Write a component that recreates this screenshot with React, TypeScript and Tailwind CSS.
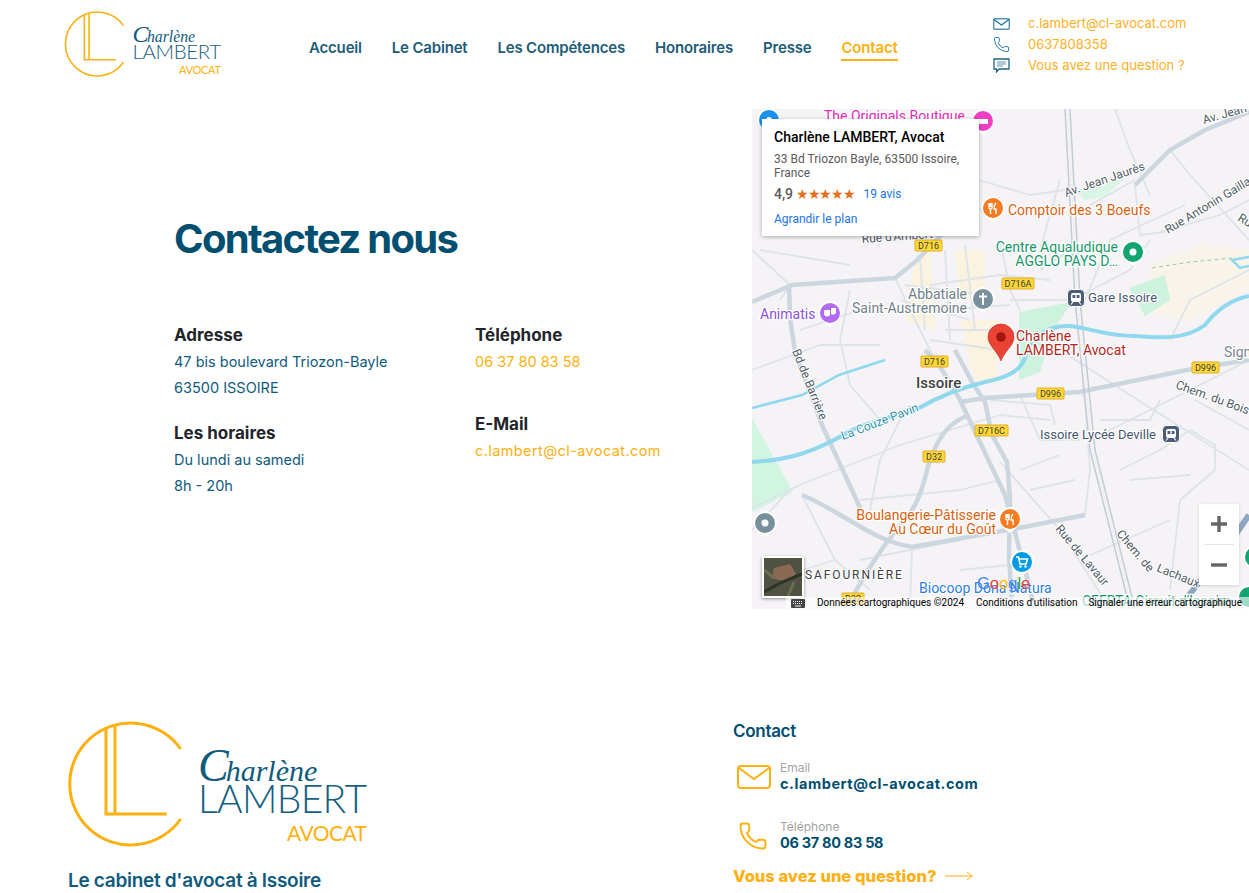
import { Phone } from "lucide-react";

const navItems = ["Accueil", "Le Cabinet", "Les Compétences", "Honoraires", "Presse", "Contact"];

const majorRoads = [
  "M1249 360L1192 369L1079 392L985 398L960 402",
  "M925 350L939 365L959 398L1005 495L1025 570L1035 609",
  "M955 350L972 382L985 402L992 435L1007 462L1010 498L1009 555L1012 609",
  "M852 598C870 565 885 542 905 520C925 495 925 470 932 455C940 435 950 422 969 415",
  "M752 302L792 285L895 278L915 262L932 245L950 225",
  "M802 495C840 510 870 540 912 547L1019 528L1085 515",
  "M789 285L790 318L795 352L822 425L862 512",
  "M1135 185L1170 150L1205 130L1249 112",
];

const minorRoads = [
  "M752 508L802 484L900 445L1000 415",
  "M802 495L835 560L870 590",
  "M752 530L790 490",
  "M1090 440L1170 400L1249 360",
  "M1060 350L1130 395L1249 470",
  "M1085 515L1090 470L1085 400L1082 392",
  "M1120 470L1160 450L1190 430L1215 445L1215 470L1180 500L1170 590",
  "M1000 462L1060 530L1110 609",
  "M1010 300L1072 300L1130 270L1150 240",
  "M1090 205L1135 180",
  "M1160 232L1220 215L1249 200",
  "M1135 185L1140 235L1165 232",
  "M979 180L1030 195L1065 190",
  "M950 225L1000 198",
  "M1115 109L1130 150L1150 195",
  "M1170 150L1190 175L1249 240",
  "M895 278L915 320L935 360",
  "M850 290L840 340L850 385L880 420",
  "M930 285L1000 275L1050 280",
  "M940 310L1010 305",
  "M945 330L1000 330",
  "M860 500L960 490L1000 480",
  "M900 420L880 460L870 510",
  "M1040 270L1070 250",
  "M1085 300L1110 240L1185 205",
  "M1170 340L1190 300L1249 270",
  "M752 250L790 285L780 300",
  "M752 370L820 345L880 345",
  "M1100 420L1150 420L1160 400",
  "M1130 480L1190 475",
  "M1195 400L1249 430",
  "M1090 555L1170 520",
  "M912 547L910 609",
  "M960 570L1010 565",
  "M860 560L960 540",
  "M770 580L835 560",
  "M1020 470L1060 455",
  "M1030 490L1075 480",
  "M1020 395L1040 440L1080 440",
  "M930 340L1000 350",
  "M920 258L925 330",
  "M945 250L950 340",
  "M965 245L975 330",
  "M905 285L985 295",
  "M900 300L970 320",
  "M1000 240L1010 290L1020 310",
  "M990 400L1050 405L1055 425",
  "M1000 415L1050 420",
  "M1060 180L1040 250",
  "M800 330L860 310",
  "M760 250L850 265",
];

const labels = [
  { x: 824, y: 121, text: "The Originals Boutique", color: "#e52bb8" },
  { x: 1008, y: 215, text: "Comptoir des 3 Boeufs", color: "#d9620f" },
  { x: 1118, y: 252, text: "Centre Aqualudique", color: "#16976b", end: true },
  { x: 1118, y: 266, text: "AGGLO PAYS D…", color: "#16976b", end: true },
  { x: 1088, y: 302, text: "Gare Issoire", color: "#47586c", size: 13 },
  { x: 967, y: 299, text: "Abbatiale", color: "#6f7f89", end: true },
  { x: 967, y: 313, text: "Saint-Austremoine", color: "#6f7f89", end: true },
  { x: 760, y: 319, text: "Animatis", color: "#8d4fe0" },
  { x: 1016, y: 341, text: "Charlène", color: "#b3261e" },
  { x: 1016, y: 355, text: "LAMBERT, Avocat", color: "#b3261e" },
  { x: 1224, y: 357, text: "Sign", color: "#7b8791" },
  { x: 916, y: 388, text: "Issoire", color: "#3c4043", weight: 500, size: 15 },
  { x: 1040, y: 439, text: "Issoire Lycée Deville", color: "#47586c", size: 13 },
  { x: 996, y: 520, text: "Boulangerie-Pâtisserie", color: "#d9620f", end: true },
  { x: 996, y: 534, text: "Au Cœur du Goût", color: "#d9620f", end: true },
  { x: 919, y: 593, text: "Biocoop Dôna Natura", color: "#2a7de8" },
  { x: 1082, y: 606, text: "CEFRTA Circuit d'Issoire", color: "#16976b" },
];

const streetLabels = [
  { x: 792, y: 351, angle: 68, text: "Bd de Barrière", color: "#4f5b66" },
  { x: 843, y: 440, angle: -21, text: "La Couze Pavin", color: "#2b93ab" },
  { x: 862, y: 243, angle: -4, text: "Rue d'Ambert", color: "#4f5b66" },
  { x: 1066, y: 197, angle: -19, text: "Av. Jean Jaurès", color: "#4f5b66" },
  { x: 1204, y: 124, angle: -16, text: "Av. Jean", color: "#4f5b66" },
  { x: 1168, y: 234, angle: -31, text: "Rue Antonin Gaillard", color: "#4f5b66" },
  { x: 1237, y: 220, angle: 32, text: "Rue", color: "#4f5b66" },
  { x: 1175, y: 388, angle: 20, text: "Chem. du Bois", color: "#4f5b66" },
  { x: 1055, y: 529, angle: 50, text: "Rue de Lavaur", color: "#4f5b66" },
  { x: 1116, y: 534, angle: 50, text: "Chem. de", color: "#4f5b66" },
  { x: 1156, y: 571, angle: 22, text: "Lachaux", color: "#4f5b66" },
];

const shields = [
  { x: 915, y: 240, w: 27, text: "D716" },
  { x: 1002, y: 278, w: 32, text: "D716A" },
  { x: 921, y: 356, w: 27, text: "D716" },
  { x: 1037, y: 388, w: 27, text: "D996" },
  { x: 1192, y: 362, w: 27, text: "D996" },
  { x: 975, y: 425, w: 33, text: "D716C" },
  { x: 923, y: 451, w: 22, text: "D32" },
  { x: 842, y: 593, w: 22, text: "D32" },
];

function Pin({ x, y, color, children }: { x: number; y: number; color: string; children?: React.ReactNode }) {
  return (
    <g transform={`translate(${x} ${y})`}>
      <path d="M-12 0A12 12 0 1 1 12 0Q9 8 0 14Q-9 8 -12 0Z" fill="#fff" />
      <circle r="10" fill={color} />
      {children}
    </g>
  );
}

function Fork() {
  return <path d="M-4-5V-1Q-4 1-2.5 1V6M-2.5-5V-1M-1-5V-1Q-1 1-2.5 1M3-5Q1-3 1 1H3V6" fill="none" stroke="#fff" strokeWidth="1.4" />;
}

function TrainBadge({ x, y }: { x: number; y: number }) {
  return (
    <g transform={`translate(${x} ${y})`}>
      <rect x="-8.5" y="-8.5" width="17" height="17" rx="4" fill="#4a5d75" stroke="#fff" />
      <rect x="-5" y="-5" width="10" height="9" rx="2" fill="#fff" />
      <path d="M-3.5-3H-.7V0H-3.5ZM.7-3H3.5V0H.7Z" fill="#4a5d75" />
      <path d="M-3 4L-5 6.5M3 4L5 6.5" stroke="#fff" strokeWidth="1.2" />
    </g>
  );
}

function MapTiles() {
  return (
    <svg viewBox="752 109 497 500" className="absolute inset-0 h-full w-full font-[Roboto,sans-serif]">
      <rect x="752" y="109" width="497" height="500" fill="#f5f3f5" />

      {/* land use */}
      <path d="M1150 265L1200 245L1249 250V290L1219 305L1185 322L1152 312Z" fill="#f8f4ea" />
      <path d="M915 260L930 250L935 330L905 320Z" fill="#faf3e0" />
      <path d="M955 250L985 250L985 300L960 300Z" fill="#faf3e0" />
      <path d="M960 320L1000 320L995 385L975 380Z" fill="#faf3e0" />
      <path d="M752 418L793 492L752 512Z" fill="#d2f5e2" />
      <path d="M1129 288L1165 275L1170 300L1145 316Z" fill="#cdf2de" />
      <path d="M1019 312L1072 302L1052 332L1040 372L1019 380Z" fill="#cdf2de" />
      <path d="M1076 190L1125 178L1105 196L1085 200Z" fill="#d8f5e6" />

      {minorRoads.map((d) => (
        <path key={d} d={d} fill="none" stroke="#dde3e9" strokeWidth="1.8" strokeLinejoin="round" />
      ))}
      {majorRoads.map((d) => (
        <path key={d} d={d} fill="none" stroke="#cbd6df" strokeWidth="4.5" strokeLinejoin="round" />
      ))}

      {/* rail */}
      <path d="M1065 109L1075 300L1090 450L1130 609" fill="none" stroke="#c3ccd4" strokeWidth="1.5" />
      <path d="M1070 109L1080 300L1095 450L1135 609" fill="none" stroke="#c3ccd4" strokeWidth="1.5" />
      <path d="M1067.5 109L1077.5 300L1092.5 450L1132.5 609" fill="none" stroke="#e4e7ea" strokeWidth="1" strokeDasharray="2 3" />

      {/* rivers */}
      <path d="M752 462C790 460 815 452 852 430C880 418 900 415 919 408C940 396 960 388 985 382C1005 378 1020 372 1025 358C1028 340 1045 325 1070 326C1090 328 1105 336 1135 336C1160 338 1185 340 1205 325C1215 312 1230 300 1249 296" fill="none" stroke="#8fd8ee" strokeWidth="4" strokeLinejoin="round" />
      <path d="M752 408L802 395L839 375L885 360" fill="none" stroke="#8fd8ee" strokeWidth="2.5" />
      <path d="M1249 257L1232 260L1240 268L1249 266" fill="none" stroke="#8fd8ee" strokeWidth="2.5" />
      <path d="M1249 515L1225 550L1189 595" fill="none" stroke="#8fa6c0" strokeWidth="6" />
      <path d="M1152 268L1190 262L1232 258" fill="none" stroke="#9cc9ae" strokeWidth="1" strokeDasharray="4 3" />

      {labels.map((l) => (
        <text
          key={l.text}
          x={l.x}
          y={l.y}
          textAnchor={l.end ? "end" : "start"}
          fontSize={l.size ?? 14}
          fontWeight={l.weight ?? 400}
          fill={l.color}
          stroke="#fff"
          strokeWidth="2.5"
          paintOrder="stroke"
        >
          {l.text}
        </text>
      ))}
      <text x="805" y="579" fontSize="12" letterSpacing="1.9" fill="#3c4043" stroke="#fff" strokeWidth="2" paintOrder="stroke">
        SAFOURNIÈRE
      </text>

      {streetLabels.map((l) => (
        <text
          key={l.text}
          transform={`translate(${l.x} ${l.y}) rotate(${l.angle})`}
          fontSize="12"
          fill={l.color}
          stroke="#fff"
          strokeWidth="2"
          paintOrder="stroke"
        >
          {l.text}
        </text>
      ))}

      {shields.map((s) => (
        <g key={`${s.text}${s.x}`}>
          <rect x={s.x} y={s.y} width={s.w} height="11" rx="1" fill="#fdd835" stroke="#e5ac2c" />
          <text x={s.x + s.w / 2} y={s.y + 8.8} textAnchor="middle" fontSize="9" fill="#3c3c3c">
            {s.text}
          </text>
        </g>
      ))}

      <Pin x={769} y={120} color="#1a90f0">
        <circle r="3" fill="#fff" />
      </Pin>
      <Pin x={983} y={121} color="#ee3fc4">
        <path d="M-5-2H5V3H-5Z" fill="#fff" />
      </Pin>
      <Pin x={993} y={208} color="#f57c20">
        <Fork />
      </Pin>
      <Pin x={1133} y={252} color="#12a56f">
        <circle r="3.5" fill="#fff" />
      </Pin>
      <Pin x={983} y={299} color="#78909c">
        <path d="M0-6V6M-4-2.5H4" stroke="#fff" strokeWidth="2" />
      </Pin>
      <Pin x={830} y={313} color="#b26af0">
        <path d="M-6-3H0V2Q-3 5-6 2ZM1-5H6V0Q4 3 1 1Z" fill="#fff" />
      </Pin>
      <Pin x={1010} y={519} color="#f57c20">
        <Fork />
      </Pin>
      <Pin x={1022} y={562} color="#039be5">
        <path d="M-6-5H-3.5L-2 2H4L5.5-3H-3" fill="none" stroke="#fff" strokeWidth="1.6" />
        <circle cx="-1.5" cy="4.5" r="1.3" fill="#fff" />
        <circle cx="3.5" cy="4.5" r="1.3" fill="#fff" />
      </Pin>
      <Pin x={765} y={523} color="#78909c">
        <circle r="3.5" fill="#fff" />
      </Pin>
      <Pin x={1255} y={557} color="#12a56f" />
      <Pin x={1249} y={597} color="#12a56f" />
      <TrainBadge x={1076} y={298} />
      <TrainBadge x={1171} y={434} />

      {/* marker */}
      <path d="M1001 361C997 350 988 346 988 337A13 13 0 0 1 1014 337C1014 346 1005 350 1001 361Z" fill="#ea4335" stroke="#c5281c" strokeWidth=".6" />
      <circle cx="1001" cy="337" r="4.8" fill="#a3160f" />
    </svg>
  );
}

function MapPanel() {
  return (
    <div className="relative h-[500px] w-[497px] shrink-0 overflow-hidden font-[Roboto,sans-serif]">
      <MapTiles />

      <div className="absolute left-[10px] top-[10px] h-[117px] w-[217px] bg-white px-3 py-[10px] shadow-[0_1px_4px_rgba(0,0,0,0.3)]">
        <div className="text-sm leading-4 font-medium text-black">Charlène LAMBERT, Avocat</div>
        <div className="mt-[7px] text-xs leading-[14px] text-[#5b5b5b]">33 Bd Triozon Bayle, 63500 Issoire, France</div>
        <div className="mt-[7px] flex h-[14px] items-center text-xs text-[#5b5b5b]">
          <span className="text-sm font-medium">4,9</span>
          <span className="ml-[3px] text-[14px] tracking-[-1.3px] text-[#e7711b]">★★★★★</span>
          <span className="ml-[9px] text-[#1a73e8]">19 avis</span>
        </div>
        <div className="mt-[10px] text-xs text-[#1a73e8]">Agrandir le plan</div>
      </div>

      <div className="absolute left-[447px] top-[395px] flex h-[81px] w-10 flex-col items-center bg-white shadow-[0_1px_3px_rgba(0,0,0,0.15)]">
        <svg viewBox="0 0 40 40" className="h-10 w-10">
          <path d="M20 12V28M12 20H28" stroke="#666" strokeWidth="3.4" />
        </svg>
        <div className="h-px w-[30px] bg-[#e6e6e6]" />
        <svg viewBox="0 0 40 40" className="h-10 w-10">
          <path d="M12 20H28" stroke="#666" strokeWidth="3.4" />
        </svg>
      </div>

      <div className="absolute left-[10px] top-[447px] h-[42px] w-[42px] border-2 border-white bg-[#5b5a45] shadow-[0_1px_3px_rgba(0,0,0,0.4)]">
        <svg viewBox="0 0 38 38" className="h-full w-full">
          <rect width="38" height="38" fill="#4f5240" />
          <path d="M10 10L26 6L32 16L22 24L8 20Z" fill="#8a6a55" />
          <path d="M0 34L16 25L38 16" fill="none" stroke="#2b3524" strokeWidth="3" />
          <path d="M0 12L10 20M24 38L30 24" stroke="#6d6c55" strokeWidth="3" />
        </svg>
      </div>

      <div className="absolute left-[225px] top-[464px] text-[16.5px] leading-5 font-[Liberation_Sans,sans-serif]">
        <span className="text-[#4285f4]">G</span>
        <span className="text-[#ea4335]">o</span>
        <span className="text-[#fbbc05]">o</span>
        <span className="text-[#4285f4]">g</span>
        <span className="text-[#34a853]">l</span>
        <span className="text-[#ea4335]">e</span>
      </div>

      <div className="absolute bottom-0 left-[34px] right-0 flex h-3 items-center whitespace-nowrap bg-white/60 text-[10px] leading-3 text-black">
        <svg viewBox="0 0 14 9" className="ml-[5px] h-[9px] w-[14px]">
          <rect width="14" height="9" rx="1" fill="#444" />
          <path d="M2 2.5H12M2 4.5H12" stroke="#fff" strokeDasharray="1 1" />
          <path d="M4 7H10" stroke="#fff" />
        </svg>
        <span className="ml-[12px]">Données cartographiques ©2024</span>
        <span className="ml-[12px]">Conditions d'utilisation</span>
        <span className="ml-[11px]">Signaler une erreur cartographique</span>
      </div>
    </div>
  );
}

function Logo({ className }: { className: string }) {
  return (
    <svg viewBox="0 0 300 128" className={className}>
      <g fill="none" stroke="#fdb00f" strokeWidth="3">
        <path d="M112.7 28A61 61 0 1 0 112.7 98" />
        <path d="M38 7V93H98.7" />
        <path d="M47 5V93" />
      </g>
      <text x="130" y="60" fontStyle="italic" fontFamily="Liberation Serif, serif" fill="#0f5b7d">
        <tspan fontSize="46">C</tspan>
        <tspan fontSize="30" dx="-3">harlène</tspan>
      </text>
      <text x="130" y="92" fontSize="39" fontWeight="300" fontFamily="Lato, sans-serif" fill="#15607f" textLength="169">
        LAMBERT
      </text>
      <text x="219" y="120" fontSize="21" fontWeight="400" fontFamily="Lato, sans-serif" fill="#fdb00f" textLength="80">
        AVOCAT
      </text>
    </svg>
  );
}

function Header() {
  return (
    <header className="relative flex h-[109px] shrink-0 items-start">
      <Logo className="ml-[64px] mt-[11px] h-[67px] w-[158px] shrink-0" />
      <nav className="ml-[87px] mt-[37px] flex gap-[30px] text-[15px] leading-[21px] font-semibold tracking-[-0.18px] text-[#1d5c78]">
        {navItems.map((item) =>
          item === "Contact" ? (
            <span key={item} className="border-b-2 border-[#fdb00f] pb-[1px] text-[#fdb00f]">
              {item}
            </span>
          ) : (
            <span key={item}>{item}</span>
          ),
        )}
      </nav>
      <div className="ml-auto mr-[35px] mt-[13px] flex w-[221px] flex-col text-[13px] leading-[21px] text-[#fcb025]">
        <div className="flex items-center gap-[18px]">
          <svg viewBox="0 0 17 12" className="h-3 w-[17px]">
            <rect x=".7" y=".7" width="15.6" height="10.6" rx="1" fill="none" stroke="#5b93b0" strokeWidth="1.4" />
            <path d="M1 1.5L8.5 7L16 1.5" fill="none" stroke="#0f6f9b" strokeWidth="1.2" />
          </svg>
          <span>c.lambert@cl-avocat.com</span>
        </div>
        <div className="flex items-center gap-[18px]">
          <Phone size={17} strokeWidth={1.3} className="text-[#0f6f9b]" />
          <span>0637808358</span>
        </div>
        <div className="flex items-center gap-[18px]">
          <svg viewBox="0 0 17 15" className="h-[15px] w-[17px]">
            <path d="M1 1H16V11H6L3.5 14V11H1Z" fill="none" stroke="#1f6684" strokeWidth="1.3" />
            <path d="M4 4H13M4 6H13M4 8H10" stroke="#5b93b0" />
          </svg>
          <span>Vous avez une question ?</span>
        </div>
      </div>
    </header>
  );
}

function InfoBlock({ title, lines, lineClass }: { title: string; lines: string[]; lineClass: string }) {
  return (
    <div>
      <h3 className="text-[17px] leading-[27px] font-bold text-[#212529]">{title}</h3>
      {lines.map((line) => (
        <p key={line} className={`text-[14.5px] leading-[26px] ${lineClass}`}>
          {line}
        </p>
      ))}
    </div>
  );
}

function ContactSection() {
  return (
    <section className="flex h-[500px] shrink-0">
      <div className="w-[752px] shrink-0 pl-[174px] pt-[103px]">
        <h1 className="text-[40px] leading-[54px] font-bold tracking-[-1.7px] text-[#004f71]">Contactez nous</h1>
        <div className="mt-[56px] flex">
          <div className="flex w-[301px] flex-col gap-[19px]">
            <InfoBlock title="Adresse" lines={["47 bis boulevard Triozon-Bayle", "63500 ISSOIRE"]} lineClass="text-[#0f5b7d]" />
            <InfoBlock title="Les horaires" lines={["Du lundi au samedi", "8h - 20h"]} lineClass="text-[#0f5b7d]" />
          </div>
          <div className="flex flex-col gap-[36px]">
            <InfoBlock title="Téléphone" lines={["06 37 80 83 58"]} lineClass="text-[#fdb00f]" />
            <InfoBlock title="E-Mail" lines={["c.lambert@cl-avocat.com"]} lineClass="tracking-[0.4px] text-[#fdb00f]" />
          </div>
        </div>
      </div>
      <MapPanel />
    </section>
  );
}

function Footer() {
  return (
    <footer className="flex h-[284px] shrink-0 pl-[68px]">
      <div className="w-[665px] shrink-0 pt-[112px]">
        <Logo className="h-[128px] w-[300px]" />
        <p className="mt-[20px] text-[19px] leading-6 font-semibold tracking-[-0.3px] text-[#0f5b7d]">Le cabinet d'avocat à Issoire</p>
      </div>
      <div className="pt-[110px]">
        <h4 className="text-[17px] leading-6 font-semibold tracking-[-0.3px] text-[#004f71]">Contact</h4>
        <div className="ml-[4px] mt-[18px] flex items-center">
          <svg viewBox="0 0 34 24" className="h-6 w-[34px]">
            <rect x="1" y="1" width="32" height="22" rx="3" fill="none" stroke="#fdb00f" strokeWidth="2" />
            <path d="M2 3L17 14L32 3" fill="none" stroke="#fdb00f" strokeWidth="2" />
          </svg>
          <div className="ml-[9px]">
            <div className="text-xs leading-[14px] text-[#a3a3a3]">Email</div>
            <div className="text-[14.5px] leading-[18px] font-bold tracking-[0.55px] text-[#004f71]">c.lambert@cl-avocat.com</div>
          </div>
        </div>
        <div className="ml-[5px] mt-[27px] flex items-center">
          <Phone size={30} strokeWidth={1.5} className="text-[#fdb00f]" />
          <div className="ml-[12px]">
            <div className="text-xs leading-[14px] text-[#a3a3a3]">Téléphone</div>
            <div className="text-[14.5px] leading-[18px] font-bold tracking-[-0.3px] text-[#004f71]">06 37 80 83 58</div>
          </div>
        </div>
        <div className="mt-[12px] flex items-center text-[16.5px] leading-6 font-extrabold text-[#fdb00f]">
          <span>Vous avez une question?</span>
          <svg viewBox="0 0 28 10" className="ml-2 h-[10px] w-[28px]">
            <path d="M0 5H27M22 1L27 5L22 9" fill="none" stroke="#fdb00f" />
          </svg>
        </div>
      </div>
    </footer>
  );
}

export default function App() {
  return (
    <div className="flex h-[893px] w-full flex-col overflow-hidden bg-white font-[Inter,sans-serif]">
      <Header />
      <ContactSection />
      <Footer />
    </div>
  );
}
